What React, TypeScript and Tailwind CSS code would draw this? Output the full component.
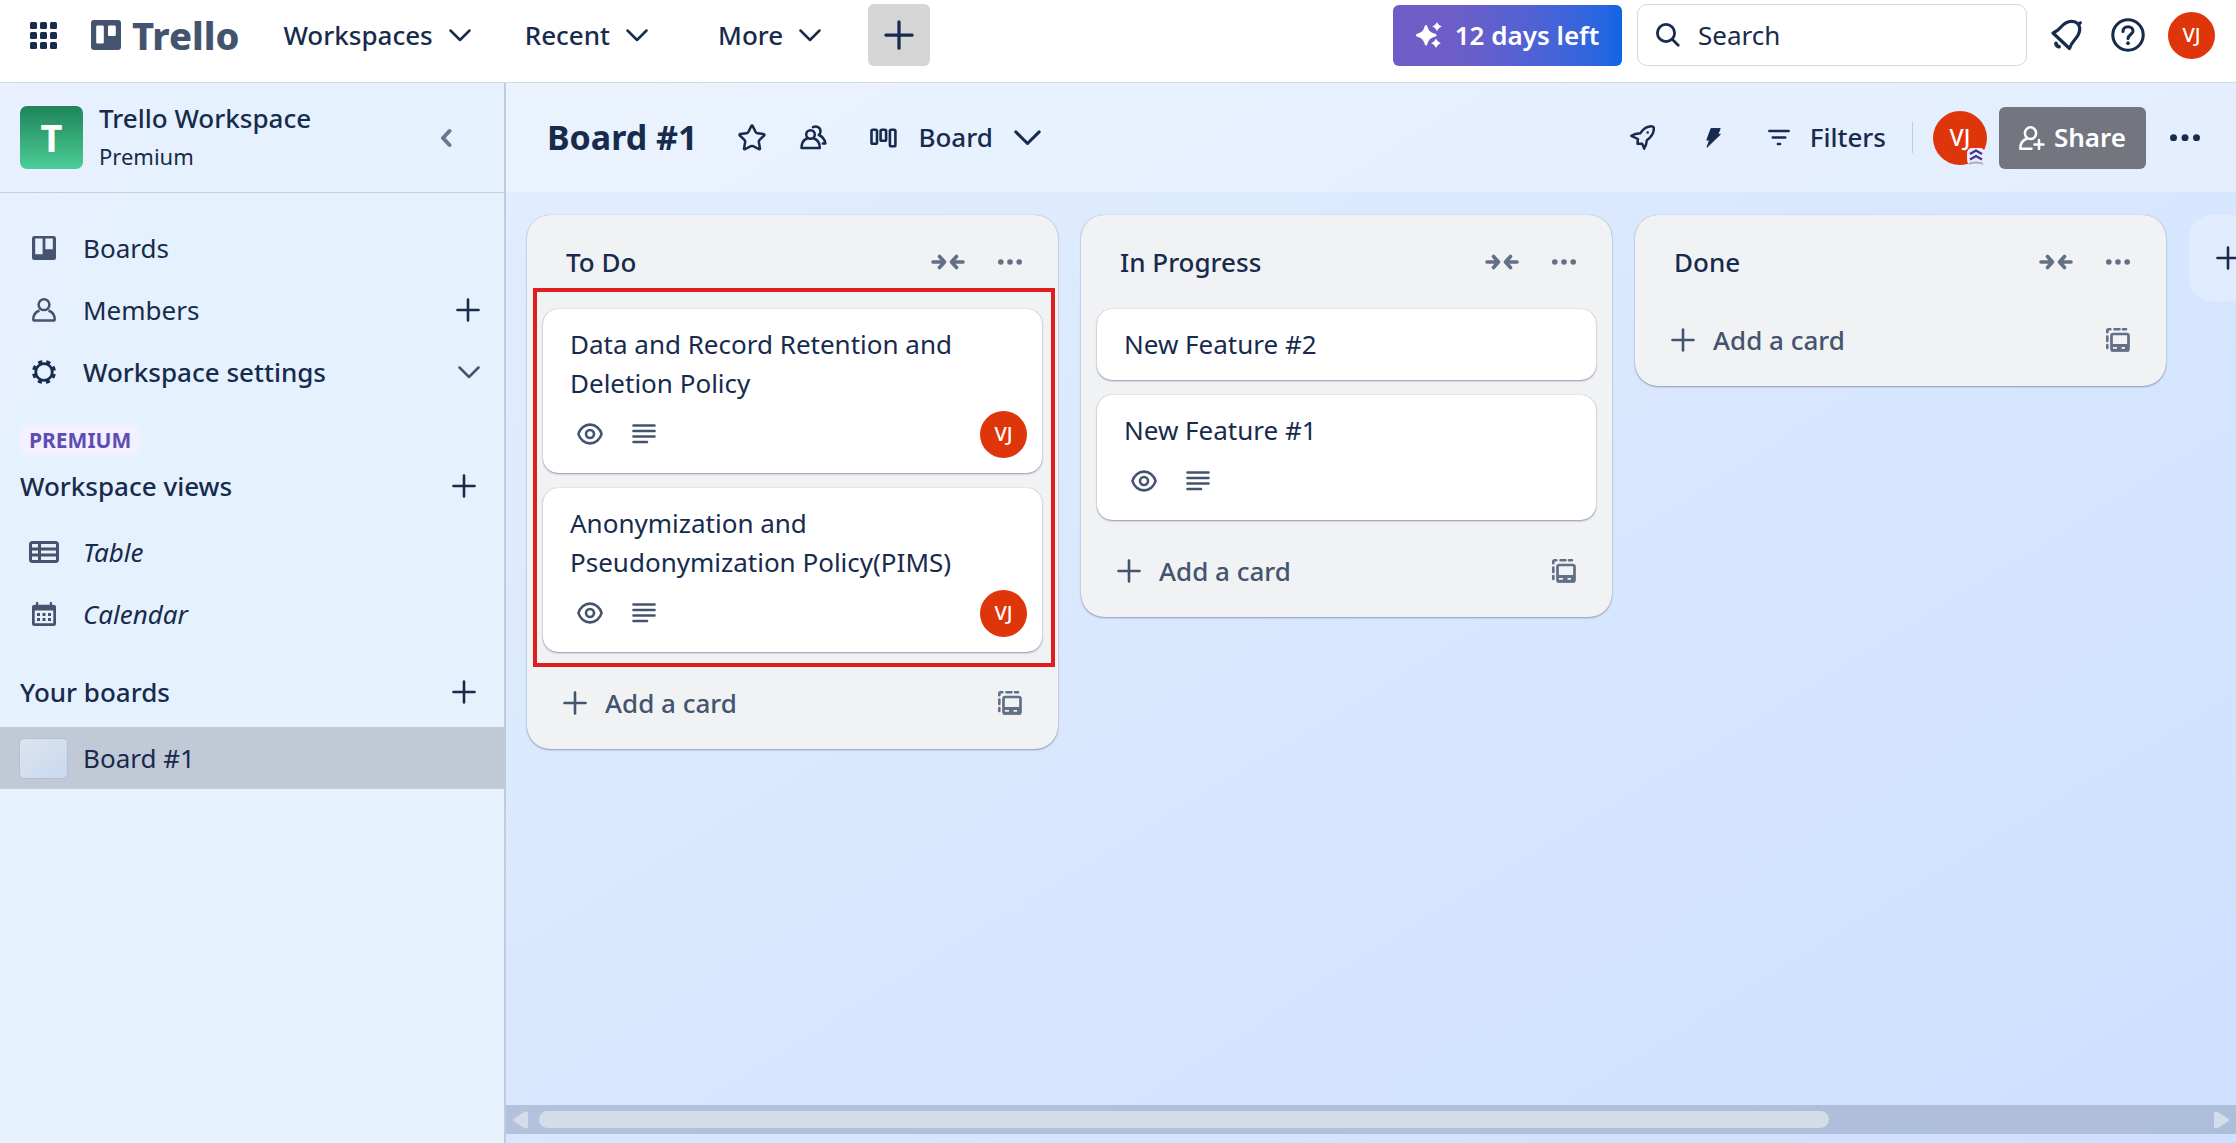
import type { ReactNode } from 'react';
import { Star } from 'lucide-react';

interface CardData {
  id: number;
  title: string;
  badges?: boolean;
  member?: string;
}

interface ListData {
  id: string;
  title: string;
  highlighted?: boolean;
  cards: CardData[];
}

const lists: ListData[] = [
  {
    id: 'todo',
    title: 'To Do',
    highlighted: true,
    cards: [
      { id: 1, title: 'Data and Record Retention and Deletion Policy', badges: true, member: 'VJ' },
      { id: 2, title: 'Anonymization and Pseudonymization Policy(PIMS)', badges: true, member: 'VJ' },
    ],
  },
  {
    id: 'progress',
    title: 'In Progress',
    cards: [
      { id: 3, title: 'New Feature #2' },
      { id: 4, title: 'New Feature #1', badges: true },
    ],
  },
  { id: 'done', title: 'Done', cards: [] },
];

function Chevron({ className = '' }: { className?: string }) {
  return (
    <svg viewBox="0 0 22 13" className={`shrink-0 ${className}`} fill="none" stroke="currentColor" strokeWidth="2.500" strokeLinecap="round" strokeLinejoin="round" aria-hidden="true">
      <path d="M1.500 1.500 11 11l9.500-9.500" />
    </svg>
  );
}

function Plus({ className = 'size-6' }: { className?: string }) {
  return (
    <svg viewBox="0 0 24 24" className={`shrink-0 ${className}`} fill="none" stroke="currentColor" strokeWidth="2.600" strokeLinecap="round" aria-hidden="true">
      <path d="M12 1.500v21M1.500 12h21" />
    </svg>
  );
}

function Dots({ className }: { className: string }) {
  return (
    <svg viewBox="0 0 24 6" className={`shrink-0 ${className}`} fill="currentColor" aria-hidden="true">
      <circle cx="2.800" cy="3" r="2.800" />
      <circle cx="12" cy="3" r="2.800" />
      <circle cx="21.200" cy="3" r="2.800" />
    </svg>
  );
}

function AppsIcon() {
  return (
    <svg viewBox="0 0 27 27" className="size-[27px]" fill="currentColor" aria-hidden="true">
      {[0, 10, 20].map((y) => [0, 10, 20].map((x) => <rect key={`${x}-${y}`} x={x} y={y} width="7" height="7" rx="1.500" />))}
    </svg>
  );
}

function TrelloMark() {
  return (
    <svg viewBox="0 0 30 30" className="size-[30px]" aria-hidden="true">
      <path
        fill="currentColor"
        fillRule="evenodd"
        d="M3 0h24a3 3 0 0 1 3 3v24a3 3 0 0 1-3 3H3a3 3 0 0 1-3-3V3a3 3 0 0 1 3-3Zm3.500 5.500A1.300 1.300 0 0 0 5.200 6.800v15.400c0 .7.600 1.300 1.300 1.300h5a1.300 1.300 0 0 0 1.300-1.300V6.800a1.300 1.300 0 0 0-1.300-1.300Zm11.800 0A1.300 1.300 0 0 0 17 6.800v8c0 .7.600 1.300 1.300 1.300h5.200a1.300 1.300 0 0 0 1.300-1.300v-8a1.300 1.300 0 0 0-1.300-1.300Z"
      />
    </svg>
  );
}

function SparkleIcon() {
  return (
    <svg viewBox="0 0 26 26" className="size-[26px]" fill="currentColor" aria-hidden="true">
      <path d="M10 3c1 0 1.100.9 1.500 2 1.400 4 2.500 5 6.900 6.600 1.300.5 2.200.7 2.200 1.700s-.9 1.200-2.200 1.700c-4.400 1.500-5.500 2.600-6.900 6.600-.4 1.100-.5 2-1.500 2s-1.100-.9-1.500-2c-1.400-4-2.500-5.100-6.500-6.600C.7 14.500 0 14.300 0 13.300s.7-1.200 2-1.700C6 10 7.100 9 8.500 5c.4-1.100.5-2 1.500-2Z" />
      <path d="M21 0c1 1.800 1.600 3.200 4.800 4.600C22.600 6 22 7.400 21 9.200 20 7.400 19.400 6 16.200 4.600 19.400 3.200 20 1.800 21 0ZM20 16.600c1 1.800 1.600 3.200 4.800 4.700-3.200 1.400-3.800 2.900-4.800 4.700-1-1.800-1.600-3.300-4.800-4.700 3.200-1.500 3.800-2.900 4.800-4.700Z" />
    </svg>
  );
}

function SearchIcon() {
  return (
    <svg viewBox="0 0 24 24" className="size-6 shrink-0" fill="none" stroke="currentColor" strokeWidth="2.800" strokeLinecap="round" aria-hidden="true">
      <circle cx="10" cy="10" r="8.600" />
      <path d="m16.500 16.500 5.700 5.700" />
    </svg>
  );
}

function BellIcon() {
  return (
    <svg viewBox="0 0 32 32" className="size-8" fill="none" stroke="currentColor" strokeWidth="3.200" strokeLinecap="round" strokeLinejoin="round" aria-hidden="true">
      <path d="M2 14 18.500 29.500c1.300-4 2.500-5.800 5.200-8.800 4.300-4.700 6.300-10 4-14.700-.8-1.500-2.300-2.700-4.200-3.200-5-1.400-9.500.7-13.500 5.200C7.500 11 5.500 12.600 2 14ZM27.500 5.500l1.800-1.700" />
      <path d="M5 24.500c.3 2 1.300 3 3 3.200" strokeWidth="3.800" />
    </svg>
  );
}

function HelpIcon() {
  return (
    <svg viewBox="0 0 34 34" className="size-[34px]" fill="none" stroke="currentColor" strokeWidth="3.100" strokeLinecap="round" aria-hidden="true">
      <circle cx="17" cy="17" r="15.200" />
      <path d="M12 13.500c0-3 2.200-4.700 5-4.700s5 1.800 5 4.400c0 3-5 3.600-5 7.200" />
      <circle cx="17" cy="25.200" r="1.900" fill="currentColor" stroke="none" />
    </svg>
  );
}

function BoardsIcon() {
  return (
    <svg viewBox="0 0 24 24" className="size-6" aria-hidden="true">
      <path
        fill="currentColor"
        fillRule="evenodd"
        d="M2.500 0h19A2.500 2.500 0 0 1 24 2.500v19a2.500 2.500 0 0 1-2.500 2.500h-19A2.500 2.500 0 0 1 0 21.500v-19A2.500 2.500 0 0 1 2.500 0Zm.7 2.500v15.800h7.400V2.500Zm10.200 0v10.700h7.400V2.500Z"
      />
    </svg>
  );
}

function PersonIcon() {
  return (
    <svg viewBox="0 0 24 24" className="size-6" fill="none" stroke="currentColor" strokeWidth="2.500" strokeLinejoin="round" aria-hidden="true">
      <circle cx="12" cy="6.700" r="5.400" />
      <path d="M7.500 12.500C4 13.800 1.300 17 1.300 21.300c0 .8.500 1.300 1.300 1.300h18.800c.8 0 1.300-.5 1.300-1.300 0-4.300-2.700-7.500-6.200-8.800" />
    </svg>
  );
}

function GearIcon() {
  return (
    <svg viewBox="0 0 24 24" className="size-6" fill="none" stroke="currentColor" aria-hidden="true">
      <circle cx="12" cy="12" r="8.300" strokeWidth="2.800" />
      <circle cx="12" cy="12" r="10.500" strokeWidth="3" strokeDasharray="4.200 4.047" strokeDashoffset="-2" />
    </svg>
  );
}

function TableIcon() {
  return (
    <svg viewBox="0 0 30 22" className="h-[22px] w-[30px]" fill="none" stroke="currentColor" strokeWidth="3" aria-hidden="true">
      <rect x="1.500" y="1.500" width="27" height="19" rx="2" />
      <path d="M1 8h28M1 14h28M10.500 1v20" />
    </svg>
  );
}

function CalendarIcon() {
  return (
    <svg viewBox="0 0 24 24" className="size-6" fill="currentColor" aria-hidden="true">
      <path
        fillRule="evenodd"
        d="M4 1a1 1 0 0 1 2.200 0v1.800h11.600V1A1 1 0 0 1 20 1v1.800h1.500A2.500 2.500 0 0 1 24 5.300v16.200a2.500 2.500 0 0 1-2.500 2.500h-19A2.500 2.500 0 0 1 0 21.500V5.300a2.500 2.500 0 0 1 2.500-2.500H4ZM2.700 8.500v12.800h18.600V8.500Z"
      />
      <path d="M5 11h3v3H5zM10.500 11h3v3h-3zM16 11h3v3h-3zM5 16h3v3H5zM10.500 16h3v3h-3zM16 16h3v3h-3z" />
    </svg>
  );
}

function PeopleIcon() {
  return (
    <svg viewBox="0 0 27 25" className="h-[25px] w-[27px]" fill="none" stroke="currentColor" strokeWidth="2.500" strokeLinejoin="round" strokeLinecap="round" aria-hidden="true">
      <circle cx="10.500" cy="9.500" r="4.300" />
      <path d="M7 13.500c-3.200 1.200-5.500 4.500-5.500 9.500h18.300c0-5-2.300-8.300-5.800-9.500" />
      <path d="M13 2.200c3.500-1.800 7.500.2 7.500 4 0 1.600-.6 2.800-1.700 3.800 3.300 1.400 6 4.300 6.600 8.400h-2.600" />
    </svg>
  );
}

function BoardViewIcon() {
  return (
    <svg viewBox="0 0 27 20" className="h-5 w-[27px]" fill="none" stroke="currentColor" strokeWidth="2.600" aria-hidden="true">
      <rect x="1.500" y="1.800" width="5.500" height="14" rx="1.300" />
      <rect x="10.600" y="1.800" width="5.500" height="11" rx="1.300" />
      <rect x="19.900" y="1.800" width="5.500" height="16.500" rx="1.300" />
    </svg>
  );
}

function RocketIcon() {
  return (
    <svg viewBox="0 0 25 25" className="size-[25px]" fill="none" stroke="currentColor" strokeWidth="2.500" strokeLinejoin="round" aria-hidden="true">
      <path d="M1.300 10.800c2.500-1.500 5-2.300 9-2.500 2.500-3.600 6.500-7.300 12-6.900 1 .1 1.500.6 1.500 1.600.2 5.400-3 9.500-7 12.300-.2 3.600-1 6-2.600 8.300l-2-4.800-4.700 0 .4-4.800Z" />
      <circle cx="17.700" cy="7.500" r="1.300" fill="currentColor" stroke="none" />
    </svg>
  );
}

function BoltIcon() {
  return (
    <svg viewBox="0 0 15 20" className="h-5 w-[15px]" fill="currentColor" stroke="currentColor" strokeLinejoin="round" aria-hidden="true">
      <path d="M5 .6h9.200l-2.400 5.700h2.600L1 19.300l2.600-7.200H.8Z" />
    </svg>
  );
}

function FilterIcon() {
  return (
    <svg viewBox="0 0 22 17" className="h-[17px] w-[22px]" fill="none" stroke="currentColor" strokeWidth="2.700" strokeLinecap="round" aria-hidden="true">
      <path d="M1.400 2h19.200M4.800 8.500h12.400M10 15h2" />
    </svg>
  );
}

function AddPersonIcon() {
  return (
    <svg viewBox="0 0 26 24" className="h-6 w-[26px]" fill="none" stroke="currentColor" strokeWidth="2.500" strokeLinecap="round" strokeLinejoin="round" aria-hidden="true">
      <ellipse cx="11.500" cy="7.200" rx="5.600" ry="5.900" />
      <path d="M8 12.500C4 14 1.300 17.500 1.300 22.700h11.200M20 14v9M15.500 18.500h9" />
    </svg>
  );
}

function CollapseIcon() {
  return (
    <svg viewBox="0 0 34 16" className="h-4 w-[34px]" fill="none" stroke="currentColor" strokeWidth="3.600" strokeLinecap="round" strokeLinejoin="round" aria-hidden="true">
      <path d="M2 8h11M8.500 2.500 13.500 8l-5 5.500M32 8H21M25.500 2.500l-5 5.500 5 5.500" />
    </svg>
  );
}

function EyeIcon() {
  return (
    <svg viewBox="0 0 26 22" className="h-[22px] w-[26px]" fill="none" stroke="currentColor" strokeWidth="2.600" aria-hidden="true">
      <path d="M1.400 11C3 5.600 7.600 1.600 13 1.600S23 5.600 24.600 11C23 16.400 18.400 20.400 13 20.400S3 16.400 1.400 11Z" strokeLinejoin="round" />
      <circle cx="13" cy="11" r="4" />
    </svg>
  );
}

function DescriptionIcon() {
  return (
    <svg viewBox="0 0 24 20" className="h-5 w-6" fill="none" stroke="currentColor" strokeWidth="2.600" strokeLinecap="round" aria-hidden="true">
      <path d="M1.500 1.500h21M1.500 7h21M1.500 12.500h21M1.500 18H15" />
    </svg>
  );
}

function TemplateIcon() {
  return (
    <svg viewBox="0 0 24 24" className="size-6" fill="none" stroke="currentColor" strokeWidth="2.700" aria-hidden="true">
      <rect x="5.500" y="6" width="17" height="16.500" rx="1.800" />
      <path d="M5 17.500h18M5 22.200h18" strokeWidth="2.800" />
      <path d="M11 17h4.500v5H11zM19 17h3.500v5H19z" fill="currentColor" stroke="none" />
      <path d="M1.300 4.300V2.500c0-.7.500-1.200 1.200-1.200h1.800M8.500 1.300h5M17 1.300h3M1.300 8.500v4.500M1.300 17v3" strokeWidth="2.600" strokeLinecap="round" />
    </svg>
  );
}

function Avatar({ initials, className = 'size-[47px]' }: { initials: string; className?: string }) {
  return (
    <span className={`flex shrink-0 items-center justify-center rounded-full bg-[#de350b] text-[20px] leading-none font-medium text-white ${className}`}>
      {initials}
    </span>
  );
}

function TopBar() {
  return (
    <header className="flex h-[83px] shrink-0 items-start border-b border-[#d3dae4] bg-white pt-1 pr-[21px] pl-[30px] font-medium">
      <div className="flex h-[62px] items-center">
        <button type="button" aria-label="More from Atlassian">
          <AppsIcon />
        </button>
        <a href="#home" className="ml-[34px] flex items-center gap-[11px] text-[#44546f]">
          <TrelloMark />
          <span className="text-[38px] leading-none font-extrabold">Trello</span>
        </a>
        <nav className="ml-11 flex items-center">
          <button type="button" className="flex items-center gap-4">
            Workspaces <Chevron className="w-[22px]" />
          </button>
          <button type="button" className="ml-[54px] flex items-center gap-4">
            Recent <Chevron className="w-[22px]" />
          </button>
          <button type="button" className="ml-[70px] flex items-center gap-4">
            More <Chevron className="w-[22px]" />
          </button>
          <button type="button" aria-label="Create" className="ml-[47px] flex size-[62px] items-center justify-center rounded-[6px] bg-[#d5d5d5]">
            <Plus className="size-[30px]" />
          </button>
        </nav>
      </div>

      <div className="ml-auto flex h-[62px] items-center">
        <button type="button" className="flex h-[61px] w-[229px] items-center justify-center gap-[13px] rounded-[6px] bg-linear-to-r from-[#6e5dc6] from-25% to-[#0c66e4] font-semibold text-white">
          <SparkleIcon />
          12 days left
        </button>
        <label className="ml-[15px] flex h-[62px] w-[390px] items-center gap-[18px] rounded-[10px] border border-[#d5d7db] px-[18px]">
          <SearchIcon />
          <input type="search" aria-label="Search" placeholder="Search" className="min-w-0 flex-1 bg-transparent font-normal outline-none placeholder:text-[#172b4d]" />
        </label>
        <button type="button" aria-label="Notifications" className="ml-6">
          <BellIcon />
        </button>
        <button type="button" aria-label="Help" className="ml-7">
          <HelpIcon />
        </button>
        <button type="button" aria-label="Account" className="ml-[23px]">
          <Avatar initials="VJ" />
        </button>
      </div>
    </header>
  );
}

function NavRow({ icon, children, action }: { icon: ReactNode; children: ReactNode; action?: ReactNode }) {
  return (
    <div className="flex h-[62px] items-center pr-6 pl-7">
      <a href="#nav" className="flex flex-1 items-center gap-[23px]">
        <span className="flex w-8 justify-center text-[#44546f]">{icon}</span>
        {children}
      </a>
      {action}
    </div>
  );
}

function Sidebar() {
  return (
    <aside className="flex w-[506px] shrink-0 flex-col border-r-2 border-[#c0cbdd] bg-linear-to-br from-[#e9f0ff] to-[#e6f1fe] to-20%">
      <div className="flex h-[110px] items-center border-b border-[#c3cddd] pr-[52px] pl-5">
        <div className="flex size-[63px] items-center justify-center rounded-[7px] bg-linear-to-b from-[#1f845a] to-[#4bce97] text-[38px] font-bold text-white">T</div>
        <div className="ml-4 flex-1 pb-1">
          <div className="leading-10 font-medium">Trello Workspace</div>
          <div className="text-[22px] leading-9">Premium</div>
        </div>
        <button type="button" aria-label="Collapse sidebar" className="text-[#68778f]">
          <svg viewBox="0 0 12 20" className="h-5 w-3" fill="none" stroke="currentColor" strokeWidth="4" strokeLinecap="round" strokeLinejoin="round" aria-hidden="true">
            <path d="M9.500 3 3 10l6.500 7" />
          </svg>
        </button>
      </div>

      <nav className="mt-6">
        <NavRow icon={<BoardsIcon />}>Boards</NavRow>
        <NavRow
          icon={<PersonIcon />}
          action={
            <button type="button" aria-label="Invite members">
              <Plus />
            </button>
          }
        >
          Members
        </NavRow>
        <NavRow
          icon={<span className="text-[#172b4d]"><GearIcon /></span>}
          action={
            <button type="button" aria-label="Expand workspace settings" className="text-[#44546f]">
              <Chevron className="w-[22px]" />
            </button>
          }
        >
          <span className="font-medium">Workspace settings</span>
        </NavRow>
      </nav>

      <span className="mt-[22px] ml-5 self-start rounded-[5px] bg-[#f3f0ff] px-[9px] text-[21px] leading-[30px] font-bold text-[#5e4db2]">PREMIUM</span>
      <div className="flex h-[62px] items-center justify-between pr-7 pl-5">
        <h2 className="font-medium">Workspace views</h2>
        <button type="button" aria-label="Add view">
          <Plus />
        </button>
      </div>
      <nav className="mt-1 italic">
        <NavRow icon={<TableIcon />}>Table</NavRow>
        <NavRow icon={<CalendarIcon />}>Calendar</NavRow>
      </nav>
      <div className="mt-4 flex h-[62px] items-center justify-between pr-7 pl-5">
        <h2 className="font-medium">Your boards</h2>
        <button type="button" aria-label="Create board">
          <Plus />
        </button>
      </div>
      <a href="#board" className="mt-1 flex h-[62px] items-center gap-[15px] bg-[#c2c9d6] pl-[19px]">
        <span className="h-[41px] w-[49px] rounded-[5px] border border-[#b3c0d4] bg-linear-to-br from-[#dce4ee] to-[#c9d9f0]" />
        Board #1
      </a>
    </aside>
  );
}

function BoardHeader() {
  return (
    <div className="flex h-[109px] shrink-0 items-center bg-white/30 pr-[36px] pl-[41px] font-medium">
      <h1 className="text-[34px] font-bold">Board #1</h1>
      <button type="button" aria-label="Star board" className="ml-10">
        <Star className="size-[30px]" strokeWidth={2} />
      </button>
      <button type="button" aria-label="Board visibility" className="ml-[33px]">
        <PeopleIcon />
      </button>
      <button type="button" className="ml-[43px] flex items-center gap-[21px]">
        <BoardViewIcon /> Board <Chevron className="w-[27px]" />
      </button>

      <div className="ml-auto flex items-center">
        <button type="button" aria-label="Power-Ups">
          <RocketIcon />
        </button>
        <button type="button" aria-label="Automation" className="ml-[51px]">
          <BoltIcon />
        </button>
        <button type="button" className="ml-[47px] flex items-center gap-5">
          <FilterIcon /> Filters
        </button>
        <span className="ml-[26px] h-[31px] w-px bg-[#c2ccda]" />
        <button type="button" aria-label="Member VJ" className="relative ml-5">
          <Avatar initials="VJ" className="size-[54px] text-[23px]" />
          <svg viewBox="0 0 18 17" className="absolute right-[2px] bottom-0 h-[17px] w-[18px]" fill="none" aria-hidden="true">
            <rect width="18" height="17" rx="5" fill="#e9edfb" />
            <path d="m3 6 6-3.500L15 6M3 11.500 9 8l6 3.500" stroke="#403294" strokeWidth="2.200" />
            <path d="M2 16c3-2 11-2 14 0" stroke="#a5adba" strokeWidth="1.800" />
          </svg>
        </button>
        <button type="button" className="ml-3 flex h-[62px] w-[147px] items-center justify-center gap-[9px] rounded-[6px] bg-[#73767f] font-semibold text-white">
          <AddPersonIcon /> Share
        </button>
        <button type="button" aria-label="Board menu" className="ml-6">
          <Dots className="w-[30px]" />
        </button>
      </div>
    </div>
  );
}

function Card({ card }: { card: CardData }) {
  return (
    <li className="rounded-[15px] bg-white py-4 pr-[15px] pl-[27px] shadow-[0_1px_2px_rgba(9,30,66,0.4),0_0_1px_rgba(9,30,66,0.3)]">
      <p className="max-w-[400px] leading-[39px]">{card.title}</p>
      {card.badges && (
        <div className="mt-2 flex h-[46px] items-center gap-[29px] pl-[7px] text-[#44546f]">
          <EyeIcon />
          <DescriptionIcon />
          {card.member && (
            <span className="ml-auto">
              <Avatar initials={card.member} />
            </span>
          )}
        </div>
      )}
    </li>
  );
}

function List({ list }: { list: ListData }) {
  return (
    <section className="w-[531px] shrink-0 rounded-[23px] bg-[#f1f2f4] shadow-[0_1px_2px_rgba(9,30,66,0.35),0_0_1px_rgba(9,30,66,0.3)]">
      <div className="flex h-[74px] items-center pt-5 pr-9 pl-[39px] text-[#626f86]">
        <h2 className="flex-1 font-medium text-[#172b4d]">{list.title}</h2>
        <button type="button" aria-label="Collapse list">
          <CollapseIcon />
        </button>
        <button type="button" aria-label="List actions" className="ml-[33px]">
          <Dots className="w-6" />
        </button>
      </div>
      {list.cards.length > 0 && (
        <ol className="relative flex flex-col gap-[15px] px-4 pt-5">
          {list.cards.map((card) => (
            <Card key={card.id} card={card} />
          ))}
          {list.highlighted && (
            <div className="pointer-events-none absolute -top-px right-[3px] -bottom-[15px] left-[6px] border-4 border-[#df1f1f]" />
          )}
        </ol>
      )}
      <div className="flex items-center justify-between pt-5 pr-9 pb-[15px] pl-9 text-[#44546f]">
        <button type="button" className="flex h-[62px] items-center gap-[18px] font-medium">
          <Plus /> Add a card
        </button>
        <button type="button" aria-label="Create from template" className="text-[#626f86]">
          <TemplateIcon />
        </button>
      </div>
    </section>
  );
}

function ScrollBar() {
  return (
    <div className="mb-[9px] flex h-[29px] shrink-0 items-center bg-[#8494b0]/45 px-[7px] text-[#d4dce7]">
      <svg viewBox="0 0 15 18" className="h-[18px] w-[15px]" fill="currentColor" aria-hidden="true">
        <path d="M12 .5Q15 0 15 2v14q0 2-3 1.500L1 10.500Q-.5 9 1 7.500Z" />
      </svg>
      <div className="mx-[11px] flex-1">
        <div className="h-[17px] w-[77.5%] rounded-full bg-[#d4dce7]" />
      </div>
      <svg viewBox="0 0 15 18" className="h-[18px] w-[15px]" fill="currentColor" aria-hidden="true">
        <path d="M3 .5Q0 0 0 2v14q0 2 3 1.500L14 10.500Q15.500 9 14 7.500Z" />
      </svg>
    </div>
  );
}

export default function App() {
  return (
    <div className="flex h-screen flex-col overflow-hidden font-['Noto_Sans','Open_Sans',sans-serif] text-[26px] leading-[39px] text-[#172b4d]">
      <TopBar />
      <div className="flex min-h-0 flex-1">
        <Sidebar />
        <main className="flex min-w-0 flex-1 flex-col bg-linear-to-br from-[#e2eefe] to-[#cee0ff]">
          <BoardHeader />
          <div className="flex min-h-0 flex-1 items-start gap-[23px] overflow-hidden pt-[23px] pl-[21px]">
            {lists.map((list) => (
              <List key={list.id} list={list} />
            ))}
            <button type="button" aria-label="Add another list" className="flex h-[86px] w-[531px] shrink-0 items-center rounded-[23px] bg-white/25 pl-[27px]">
              <Plus />
            </button>
          </div>
          <ScrollBar />
        </main>
      </div>
    </div>
  );
}
